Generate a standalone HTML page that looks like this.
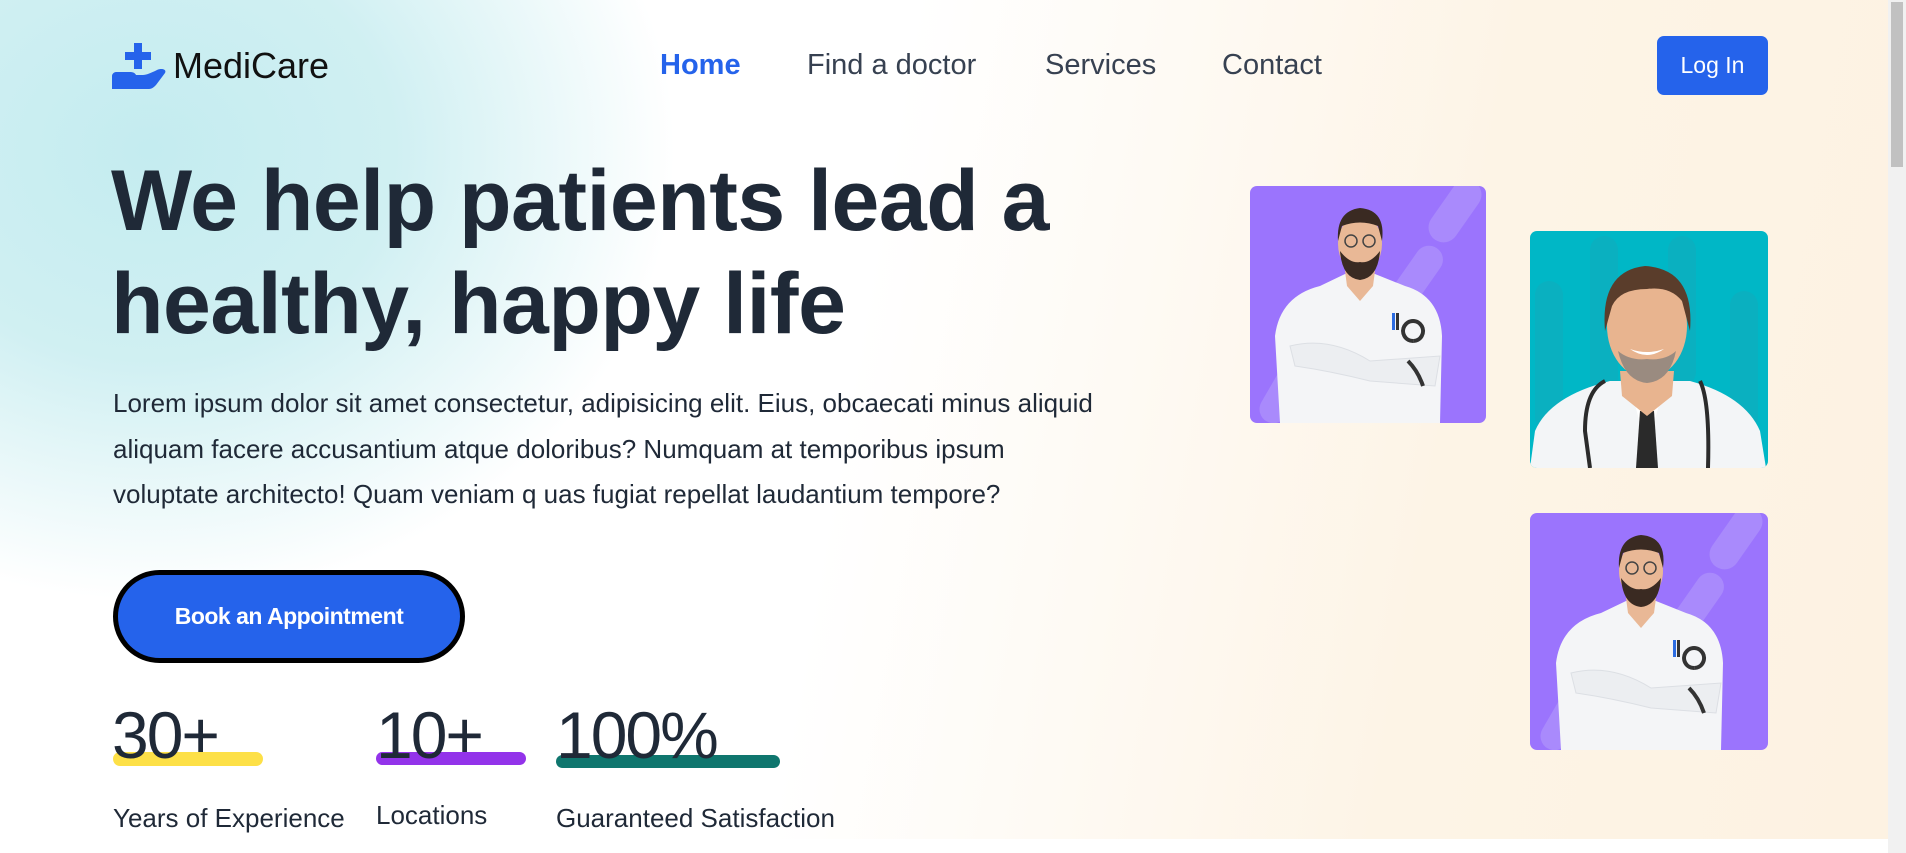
<!DOCTYPE html>
<html><head><meta charset="utf-8">
<style>
*{margin:0;padding:0;box-sizing:border-box}
html,body{width:1906px;height:853px;overflow:hidden}
body{font-family:"Liberation Sans",sans-serif;color:#1f2937;position:relative;
background:#fff}
.bg{position:absolute;left:0;top:0;width:1888px;height:839px;
background:
radial-gradient(ellipse 700px 600px at 150px 150px, rgba(196,236,240,1) 0%, rgba(203,238,241,.9) 35%, rgba(255,255,255,0) 75%),
linear-gradient(100deg,#ffffff 0%,#ffffff 45%,#fdf4e6 75%,#fdf2e2 100%);}
.scroll{position:absolute;left:1888px;top:0;width:18px;height:853px;background:#f1f1f1}
.scroll div{position:absolute;left:3px;top:2px;width:12px;height:165px;background:#c1c1c1}
.abs{position:absolute;white-space:nowrap}
.nav{font-size:29px;color:#374151;top:49px}
.card{position:absolute;border-radius:7px;overflow:hidden}
.num{top:697px;font-size:66px;letter-spacing:-2px;color:#1f2937}
</style></head><body>
<div class="bg"></div>
<div class="scroll"><div></div></div>

<svg class="abs" style="left:112px;top:42px" width="56" height="48" viewBox="0 0 56 48">
<path d="M22 1h8v9h9v8h-9v9h-8v-9h-9v-8h9z" fill="#2563eb"/>
<path d="M0 34c0-2 2-4 4-4h14c3 0 5 1 6 3h7c3 0 8-2 14-5c4-2 10-1 8 3l-9 12c-2 2-4 4-7 4H0z" fill="#2563eb"/>
</svg>
<div class="abs" style="left:173px;top:45px;font-size:36px;color:#111">MediCare</div>

<div class="abs nav" style="left:660px;color:#2563eb;font-weight:bold">Home</div>
<div class="abs nav" style="left:807px">Find a doctor</div>
<div class="abs nav" style="left:1045px">Services</div>
<div class="abs nav" style="left:1222px">Contact</div>
<div class="abs" style="left:1657px;top:36px;width:111px;height:59px;background:#2563eb;border-radius:7px;color:#fff;font-size:23px;line-height:59px;text-align:center">Log In</div>

<div class="abs" style="left:111px;top:150px;font-size:86px;font-weight:bold;line-height:103px;color:#1f2937;letter-spacing:-0.5px">We help patients lead a<br>healthy, happy life</div>

<div class="abs" style="left:113px;top:381px;font-size:26px;line-height:45.5px;color:#1f2937">Lorem ipsum dolor sit amet consectetur, adipisicing elit. Eius, obcaecati minus aliquid<br>aliquam facere accusantium atque doloribus? Numquam at temporibus ipsum<br>voluptate architecto! Quam veniam q uas fugiat repellat laudantium tempore?</div>

<div class="abs" style="left:113px;top:570px;width:352px;height:93px;background:#2563eb;border:5px solid #000;border-radius:47px;color:#fff;font-weight:bold;font-size:23px;line-height:83px;text-align:center;letter-spacing:-0.5px">Book an Appointment</div>

<div class="abs" style="left:113px;top:752px;width:150px;height:14px;background:#fde047;border-radius:7px"></div>
<div class="abs" style="left:376px;top:752px;width:150px;height:13px;background:#9333ea;border-radius:7px"></div>
<div class="abs" style="left:556px;top:755px;width:224px;height:13px;background:#0f766e;border-radius:7px"></div>
<div class="abs num" style="left:112px">30+</div>
<div class="abs num" style="left:376px">10+</div>
<div class="abs num" style="left:556px">100%</div>
<div class="abs" style="left:113px;top:803px;font-size:26px">Years of Experience</div>
<div class="abs" style="left:376px;top:800px;font-size:26px">Locations</div>
<div class="abs" style="left:556px;top:803px;font-size:26px">Guaranteed Satisfaction</div>

<!-- card 1 -->
<div class="card" style="left:1250px;top:186px;width:236px;height:237px;background:#9b74fd">
<svg width="236" height="237" viewBox="0 0 236 237">
<g fill="#a98afc"><rect x="190" y="-10" width="30" height="70" rx="15" transform="rotate(35 205 25)"/><rect x="150" y="55" width="28" height="80" rx="14" transform="rotate(35 164 95)"/><rect x="20" y="170" width="28" height="70" rx="14" transform="rotate(30 34 205)"/></g>
<path d="M30 237 L25 150 Q30 110 70 100 L95 88 L125 88 L155 100 Q190 110 192 150 L190 237Z" fill="#f4f5f7"/>
<path d="M40 160 Q80 150 120 175 L190 170 L185 200 L120 195 Q80 185 45 180Z" fill="#eceef1" stroke="#dcdfe4"/>
<rect x="142" y="127" width="3" height="17" fill="#2b6be0"/><rect x="146" y="127" width="3" height="17" fill="#333"/>
<path d="M163 155 a10 10 0 1 1 0.1 0 M158 175 q10 10 15 25" stroke="#333" stroke-width="4" fill="none"/>
<path d="M95 85 L97 100 L110 115 L123 100 L125 85Z" fill="#e9b896"/>
<ellipse cx="110" cy="58" rx="22" ry="29" fill="#e9b896"/>
<path d="M88 55 Q86 25 110 22 Q136 24 132 55 L128 40 Q110 33 92 40Z" fill="#3a2a22"/>
<path d="M90 65 Q92 92 110 94 Q128 92 130 65 Q120 78 110 76 Q100 78 90 65Z" fill="#3a2a22"/>
<circle cx="101" cy="55" r="6" fill="none" stroke="#444" stroke-width="1.5"/><circle cx="119" cy="55" r="6" fill="none" stroke="#444" stroke-width="1.5"/>
</svg></div>

<!-- card 2 -->
<div class="card" style="left:1530px;top:231px;width:238px;height:237px;background:#00b7c6">
<svg width="238" height="237" viewBox="0 0 238 237">
<g fill="#0ab0c0"><rect x="60" y="5" width="28" height="160" rx="14"/><rect x="138" y="5" width="28" height="150" rx="14"/><rect x="5" y="50" width="28" height="150" rx="14"/><rect x="200" y="60" width="28" height="140" rx="14"/></g>
<path d="M0 237 L5 200 Q20 165 80 150 L160 150 Q215 165 230 200 L236 237Z" fill="#f3f5f7"/>
<path d="M100 155 L112 200 L108 237 L125 237 L122 200 L134 155Z" fill="#fff"/>
<path d="M110 180 L124 180 L128 237 L106 237Z" fill="#2a2a2a"/>
<path d="M60 237 L55 200 Q55 160 75 150 M170 150 Q180 170 178 237" stroke="#2b2b2b" stroke-width="4" fill="none"/>
<path d="M90 140 L92 165 L117 185 L142 165 L144 140Z" fill="#e8b48f"/>
<ellipse cx="117" cy="95" rx="40" ry="52" fill="#e8b48f"/>
<path d="M75 100 Q70 40 115 35 Q165 38 160 100 L152 70 Q140 55 117 58 Q90 58 82 75Z" fill="#5a3d2b"/>
<path d="M88 120 Q95 150 117 152 Q140 150 146 120 Q135 130 117 128 Q100 130 88 120Z" fill="#9a8b80"/>
<path d="M100 118 Q117 130 134 118 Q117 124 100 118Z" fill="#fff"/>
</svg></div>

<!-- card 3 -->
<div class="card" style="left:1530px;top:513px;width:238px;height:237px;background:#9b74fd">
<svg width="238" height="237" viewBox="0 0 236 237">
<g fill="#a98afc"><rect x="190" y="-10" width="30" height="70" rx="15" transform="rotate(35 205 25)"/><rect x="150" y="55" width="28" height="80" rx="14" transform="rotate(35 164 95)"/><rect x="20" y="170" width="28" height="70" rx="14" transform="rotate(30 34 205)"/></g>
<path d="M30 237 L25 150 Q30 110 70 100 L95 88 L125 88 L155 100 Q190 110 192 150 L190 237Z" fill="#f4f5f7"/>
<path d="M40 160 Q80 150 120 175 L190 170 L185 200 L120 195 Q80 185 45 180Z" fill="#eceef1" stroke="#dcdfe4"/>
<rect x="142" y="127" width="3" height="17" fill="#2b6be0"/><rect x="146" y="127" width="3" height="17" fill="#333"/>
<path d="M163 155 a10 10 0 1 1 0.1 0 M158 175 q10 10 15 25" stroke="#333" stroke-width="4" fill="none"/>
<path d="M95 85 L97 100 L110 115 L123 100 L125 85Z" fill="#e9b896"/>
<ellipse cx="110" cy="58" rx="22" ry="29" fill="#e9b896"/>
<path d="M88 55 Q86 25 110 22 Q136 24 132 55 L128 40 Q110 33 92 40Z" fill="#3a2a22"/>
<path d="M90 65 Q92 92 110 94 Q128 92 130 65 Q120 78 110 76 Q100 78 90 65Z" fill="#3a2a22"/>
<circle cx="101" cy="55" r="6" fill="none" stroke="#444" stroke-width="1.5"/><circle cx="119" cy="55" r="6" fill="none" stroke="#444" stroke-width="1.5"/>
</svg></div>
</body></html>
